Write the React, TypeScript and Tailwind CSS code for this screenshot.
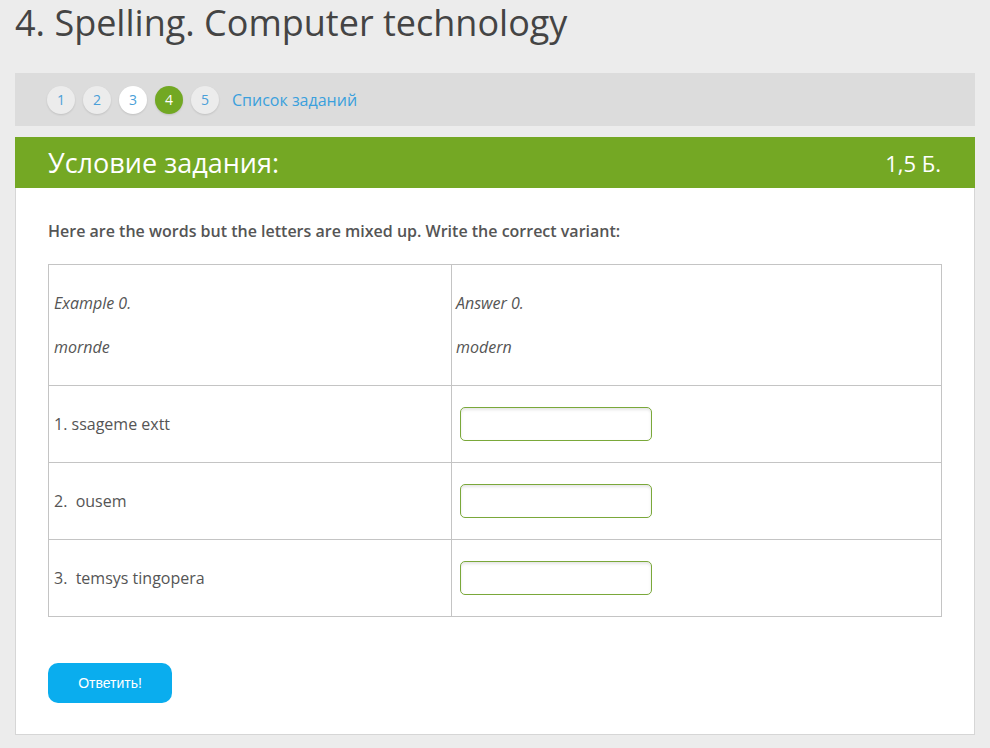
import React from 'react'

const rows = [
  { label: '1. ssageme extt' },
  { label: '2.  ousem' },
  { label: '3.  temsys tingopera' },
]

const Pager = () => {
  const items = [1, 2, 3, 4, 5]
  return (
    <div className="flex items-center gap-2">
      {items.map(n => {
        let cls = 'bg-[#ececec] text-[#4a9fd8]'
        if (n === 3) cls = 'bg-white text-[#4a9fd8]'
        if (n === 4) cls = 'bg-[#72a823] text-white'
        return (
          <div
            key={n}
            className={`w-7 h-7 rounded-full flex items-center justify-center text-[14px] shadow-[0_1px_2px_rgba(0,0,0,0.12)] ${cls}`}
          >
            {n}
          </div>
        )
      })}
      <span className="ml-[5px] text-[16px] text-[#3aa0dd]">Список заданий</span>
    </div>
  )
}

export default function App() {
  return (
    <div
      className="min-h-[748px] bg-[#ececec] px-[15px] pb-[12px]"
      style={{ fontFamily: '"Open Sans", "Liberation Sans", sans-serif' }}
    >
      <h1 className="text-[36px] leading-[46px] text-[#444] font-normal">4. Spelling. Computer technology</h1>

      <div className="mt-[27px] h-[53px] bg-[#dcdcdc] flex items-center pl-[32px] pr-4">
        <Pager />
      </div>

      <div className="mt-[11px] h-[51px] bg-[#74a824] flex items-center justify-between pl-[33px] pr-[34px] text-white">
        <span className="text-[27px] leading-none">Условие задания:</span>
        <span className="text-[22px] leading-none">1,5 Б.</span>
      </div>

      <div className="bg-white border border-[#d6d6d6] border-t-0 h-[547px] pl-[32px] pr-[32px] pt-[33px]">
        <p className="text-[16px] font-semibold text-[#555] leading-[20px]">
          Here are the words but the letters are mixed up. Write the correct variant:
        </p>

        <table className="mt-[23px] w-[894px] border-collapse text-[16px] text-[#555]">
          <tbody>
            <tr className="h-[121px]">
              <td className="w-[403px] border border-[#c4c4c4] pl-[5px] align-middle italic">
                <div className="leading-[22px]">Example 0.</div>
                <div className="mt-[22px] leading-[22px]">mornde</div>
              </td>
              <td className="border border-[#c4c4c4] pl-[4px] align-middle italic">
                <div className="leading-[22px]">Answer 0.</div>
                <div className="mt-[22px] leading-[22px]">modern</div>
              </td>
            </tr>
            {rows.map(r => (
              <tr key={r.label} className="h-[77px]">
                <td className="border border-[#c4c4c4] pl-[5px] align-middle whitespace-pre">{r.label}</td>
                <td className="border border-[#c4c4c4] pl-[8px] align-middle">
                  <input
                    type="text"
                    className="block w-[192px] h-[34px] rounded-[5px] border border-[#7aa83a] bg-white shadow-[inset_0_2px_3px_rgba(0,0,0,0.1)] outline-none"
                  />
                </td>
              </tr>
            ))}
          </tbody>
        </table>

        <button
          className="mt-[46px] w-[124px] h-[40px] rounded-[10px] bg-[#0aadee] text-white text-[14px]"
          style={{ fontFamily: '"Liberation Sans", Arial, sans-serif' }}
        >
          Ответить!
        </button>
      </div>
    </div>
  )
}
